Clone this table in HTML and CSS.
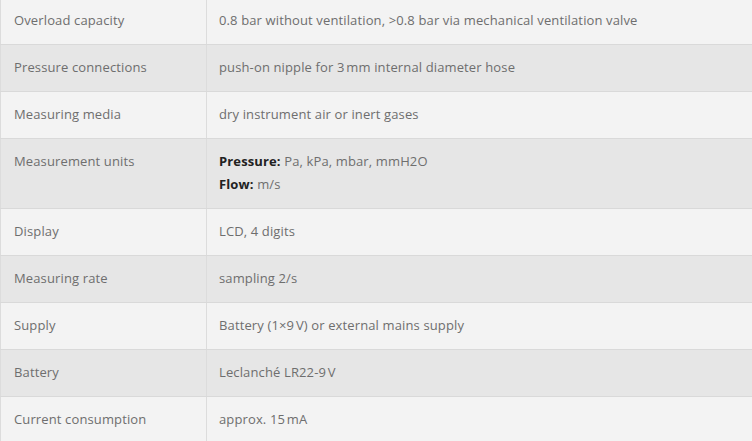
FILE: index.html
```html
<!DOCTYPE html>
<html>
<head>
<meta charset="utf-8">
<link rel="stylesheet" href="styles.css">
</head>
<body>
<table class="specs">
<tbody>
<tr><td class="k">Overload capacity</td><td class="v">0.8 bar without ventilation, &gt;0.8 bar via mechanical ventilation valve</td></tr>
<tr><td class="k">Pressure connections</td><td class="v">push-on nipple for 3&#8239;mm internal diameter hose</td></tr>
<tr><td class="k">Measuring media</td><td class="v">dry instrument air or inert gases</td></tr>
<tr><td class="k">Measurement units</td><td class="v"><b>Pressure:</b> Pa, kPa, mbar, mmH2O<br><b>Flow:</b> m/s</td></tr>
<tr><td class="k">Display</td><td class="v">LCD, 4 digits</td></tr>
<tr><td class="k">Measuring rate</td><td class="v">sampling 2/s</td></tr>
<tr><td class="k">Supply</td><td class="v">Battery (1×9&#8239;V) or external mains supply</td></tr>
<tr><td class="k">Battery</td><td class="v">Leclanché LR22-9&#8239;V</td></tr>
<tr><td class="k">Current consumption</td><td class="v">approx. 15&#8239;mA</td></tr>
</tbody>
</table>
</body>
</html>
```

FILE: styles.css
```css
html, body {
  margin: 0;
  padding: 0;
  background: #ffffff;
}
body {
  font-family: "Open Sans", "Noto Sans", sans-serif;
  font-size: 13px;
  letter-spacing: 0.13px;
  color: #6e6e6e;
}
.specs {
  width: 752px;
  border-collapse: collapse;
  margin-top: -2px;
}
.specs td {
  padding: 11px 12px 12px 13px;
  line-height: 23px;
  vertical-align: top;
  border-bottom: 1px solid #d9d9d9;
}
.specs td.v {
  padding-left: 12px;
}
.specs tr:nth-child(odd) td {
  background: #f3f3f3;
}
.specs tr:nth-child(even) td {
  background: #e6e6e6;
}
.specs td.k {
  width: 180px;
  border-left: 1px solid #dcdcdc;
  border-right: 1px solid #dcdcdc;
}
.specs b {
  color: #222222;
  font-weight: 700;
}
```
